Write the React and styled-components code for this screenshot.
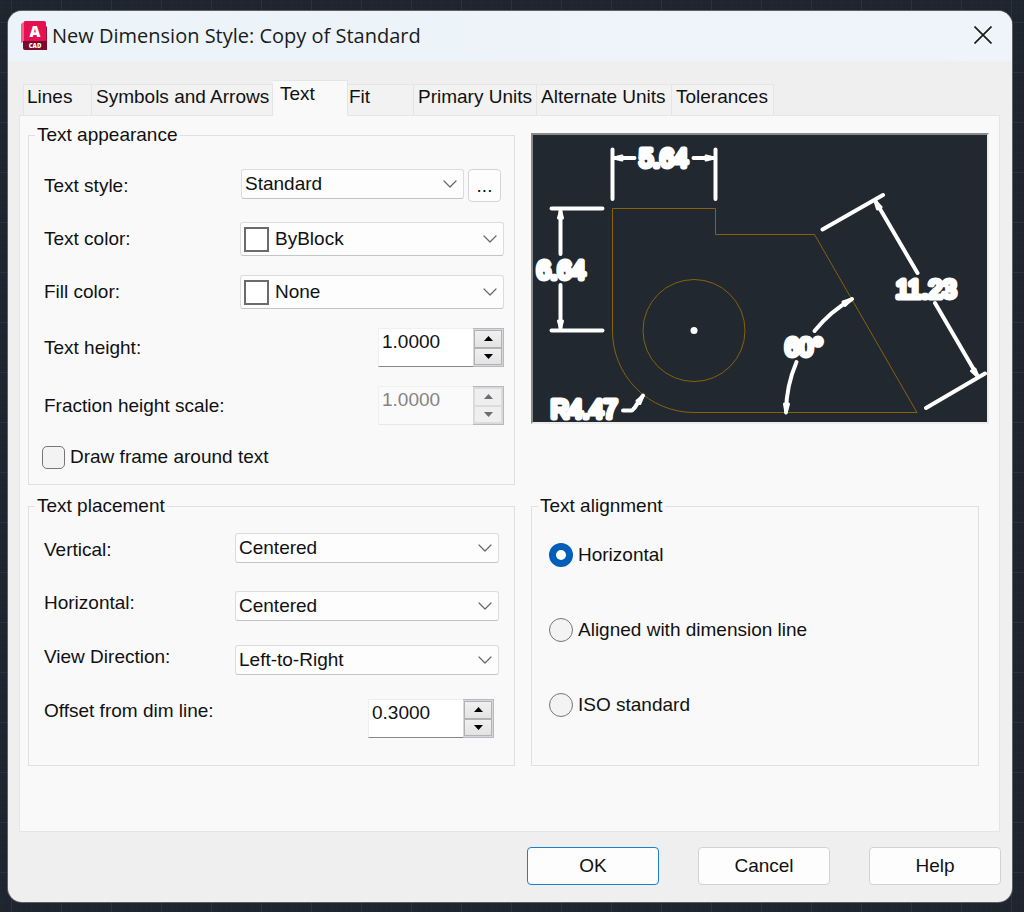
import React, { useState } from 'react';
import styled, { createGlobalStyle, css } from 'styled-components';
import { ChevronDown } from 'lucide-react';

const GlobalStyle = createGlobalStyle`
  * {
    box-sizing: border-box;
  }

  body {
    margin: 0;
    background-color: #1e252e;
    background-image:
      linear-gradient(to right, #2b323e 1px, transparent 1px),
      linear-gradient(to bottom, #2b323e 1px, transparent 1px),
      linear-gradient(to right, #212832 1px, transparent 1px),
      linear-gradient(to bottom, #212832 1px, transparent 1px);
    background-size: 50px 50px, 50px 50px, 10px 10px, 10px 10px;
    background-position: 11px 22px, 11px 22px, 1px 2px, 1px 2px;
    color: #111;
    font-family: 'Liberation Sans', Arial, sans-serif;
    font-size: 19px;
    line-height: 22px;
  }

  button, input, select {
    margin: 0;
    font: inherit;
    color: inherit;
  }
`;

const Desktop = styled.div`
  display: flex;
  min-height: 100vh;
  padding: 11px 12px 10px 8px;
`;

const Dialog = styled.form`
  flex: 1;
  min-width: 0;
  display: flex;
  flex-direction: column;
  background: #efefef;
  border-radius: 14px;
  box-shadow: 0 0 0 1px #5d6165;
  overflow: hidden;
`;

const TitleBar = styled.header`
  display: flex;
  align-items: center;
  height: 50px;
  padding: 0 20px 2px 13px;
  background: linear-gradient(to right, #ebf4f8, #eff3fa);
`;

const Title = styled.h1`
  flex: 1;
  margin: 0 0 0 4px;
  padding-top: 2px;
  font-family: 'Open Sans', 'Noto Sans', sans-serif;
  font-size: 20px;
  font-weight: 400;
  line-height: 28px;
  color: #1b1b1b;
`;

const CloseButton = styled.button`
  display: flex;
  padding: 0;
  border: 0;
  background: none;
`;

const Tabs = styled.div`
  display: flex;
  align-items: flex-end;
  padding: 19px 12px 0 15px;
`;

const Tab = styled.button`
  display: flex;
  align-items: flex-start;
  width: ${props => props.$width}px;
  height: 31px;
  padding: 0 0 0 4px;
  border: 1px solid #e5e5e5;
  border-width: 1px 1px 0 0;
  background: #f2f2f2;
  line-height: 24px;
  white-space: nowrap;

  &:first-child {
    padding-left: 3px;
    border-left-width: 1px;
  }

  ${props => props.$active && css`
    height: 36px;
    margin-bottom: -1px;
    padding-left: 7px;
    background: #f9f9f9;
    line-height: 26px;
    z-index: 1;

    & + button {
      padding-left: 1px;
    }
  `}
`;

const Panel = styled.main`
  flex: 1;
  display: grid;
  grid-template-columns: minmax(0, 487fr) minmax(0, 458fr);
  align-content: start;
  gap: 10px 16px;
  margin: 0 12px 0 11px;
  padding: 8px 10px 24px 8px;
  border: 1px solid #e5e5e5;
  background: #f9f9f9;
`;

const Group = styled.fieldset`
  min-width: 0;
  margin: 0 ${props => props.$inset || 0}px 0 0;
  padding: 0;
  border: 1px solid #e0e0e0;
`;

const Legend = styled.legend`
  margin-left: 6px;
  padding: 0 2px;
`;

const AppearanceFields = styled.div`
  display: flex;
  flex-direction: column;
  gap: 19px;
  padding: 23px 10px 14px 13px;
`;

const PlacementFields = styled.div`
  display: flex;
  flex-direction: column;
  gap: 24px;
  padding: 16px 15px 27px 13px;
`;

const AlignmentFields = styled.div`
  display: flex;
  flex-direction: column;
  align-items: flex-start;
  gap: 49px;
  padding: 25px 17px;
`;

const Row = styled.div`
  display: flex;
  align-items: flex-start;
  min-height: ${props => props.$height || 30}px;
`;

const Label = styled.label`
  flex: 1;
  align-self: ${props => (props.$top ? 'flex-start' : 'center')};
  padding-left: 2px;
  line-height: 24px;
`;

const Field = styled.div`
  display: flex;
  justify-content: flex-end;
  gap: 4px;
  width: 264px;
  padding: ${props => props.$padding || '0'};
`;

// The select, its chevron and the colour swatch share one grid cell
const SelectBox = styled.div`
  flex: 1;
  display: grid;
  grid-template-columns: 1fr;
  align-items: center;
  height: ${props => (props.$swatch ? 34 : 30)}px;

  > * {
    grid-area: 1 / 1;
  }

  svg {
    justify-self: end;
    margin-right: 2px;
    pointer-events: none;
  }
`;

const SelectInput = styled.select`
  appearance: none;
  width: 100%;
  height: 100%;
  padding: 0 28px 0 ${props => (props.$swatch ? 34 : 3)}px;
  border: 1px solid #dcdcdc;
  border-bottom-color: #c4c4c4;
  border-radius: 3px;
  background: #fdfdfd;
`;

const Swatch = styled.span`
  width: 25px;
  height: 25px;
  margin-left: 4px;
  border: 2px solid #6b6b6b;
  background: #fff;
  pointer-events: none;
`;

const MoreButton = styled.button`
  width: 33px;
  height: 33px;
  padding: 0;
  border: 1px solid #d4d4d4;
  border-radius: 4px;
  background: #fdfdfd;
`;

const Spinner = styled.div`
  display: grid;
  grid-template-columns: 95px 31px;
  width: 126px;
  height: 39px;
`;

const SpinnerInput = styled.input`
  min-width: 0;
  padding: 0 0 12px 3px;
  border: 1px solid #efefef;
  border-right: 0;
  border-bottom-color: #868686;
  border-radius: 0;
  background: #fff;

  &:disabled {
    border-bottom-color: #e8e8e8;
    background: #fafafa;
    color: #858585;
  }
`;

const SpinnerButtons = styled.div`
  display: grid;
  grid-template-rows: 1fr 1fr;
  padding: 1px;
  border: 1px solid #b9b9bd;
  border-left-width: 0;
  background: #d8d8dc;
`;

const StepButton = styled.button`
  display: flex;
  align-items: center;
  justify-content: center;
  padding: 0;
  border: 1px solid #b2b2b2;
  background: linear-gradient(#f0f0f0, #e3e3e3);
  color: #000;

  &:disabled {
    border-color: #dcdcdc;
    background: #efefef;
    color: #6d6d6d;
  }
`;

const Choice = styled.label`
  display: flex;
  align-items: center;
  gap: 5px;
  min-height: 26px;
`;

const Checkbox = styled.input`
  appearance: none;
  width: 23px;
  height: 23px;
  border: 1px solid #767676;
  border-radius: 5px;
  background: #f3f3f3;

  &:checked {
    background: #005fb8;
  }
`;

const Radio = styled.input`
  appearance: none;
  width: 24px;
  height: 24px;
  border: 1px solid #767676;
  border-radius: 50%;
  background: #f3f3f3;

  &:checked {
    border: 7px solid #005fb8;
    background: #fff;
  }
`;

const Preview = styled.div`
  align-self: start;
  margin-top: 9px;
  border: 2px solid;
  border-color: #8a8a8a #ececec #ececec #8a8a8a;
  background: #21282f;

  svg {
    display: block;
    width: 100%;
    overflow: visible;
  }
`;

const Footer = styled.footer`
  display: flex;
  justify-content: flex-end;
  gap: 39px;
  padding: 15px 11px 17px;
`;

const DialogButton = styled.button`
  width: 132px;
  height: 38px;
  border: 1px solid ${props => (props.$primary ? '#1b7fd0' : '#d2d2d2')};
  border-radius: 4px;
  background: #fdfdfd;
`;

const tabs = [
  { name: 'Lines', width: 69 },
  { name: 'Symbols and Arrows', width: 181 },
  { name: 'Text', width: 75 },
  { name: 'Fit', width: 66 },
  { name: 'Primary Units', width: 123 },
  { name: 'Alternate Units', width: 135 },
  { name: 'Tolerances', width: 102 },
];

const alignments = ['Horizontal', 'Aligned with dimension line', 'ISO standard'];

function Logo() {
  return (
    <svg width="27" height="29" viewBox="0 0 27 29" aria-hidden="true">
      <path d="M0 3 L4 0 V20 L0 22 Z" fill="#f0608a" />
      <path d="M24 4 L26 6 V29 H24 Z" fill="#9b0f3c" />
      <path d="M4 0 H23 Q25 0 25 2 V21 H3 V1 Z" fill="#e51050" />
      <path d="M2 20 H26 V29 H4 Q2 29 2 27 Z" fill="#7c0a2e" />
      <text x="14" y="16" textAnchor="middle" fontFamily="Open Sans, sans-serif" fontSize="15" fontWeight="800" fill="#fff">A</text>
      <text x="14" y="27" textAnchor="middle" fontFamily="Open Sans, sans-serif" fontSize="6" fontWeight="800" fill="#fff">CAD</text>
    </svg>
  );
}

function Select({ id, options, swatch }) {
  return (
    <SelectBox $swatch={swatch}>
      <SelectInput id={id} $swatch={swatch}>
        {options.map(option => <option key={option}>{option}</option>)}
      </SelectInput>
      {swatch && <Swatch />}
      <ChevronDown size={24} strokeWidth={1.2} color="#666" />
    </SelectBox>
  );
}

function NumberSpinner({ id, initial, disabled }) {
  const [value, setValue] = useState(initial);
  const step = amount => setValue((Math.max(0, Number(value) + amount) || 0).toFixed(4));

  return (
    <Spinner>
      <SpinnerInput id={id} value={value} disabled={disabled} onChange={e => setValue(e.target.value)} />
      <SpinnerButtons>
        <StepButton type="button" aria-label="Increase" disabled={disabled} onClick={() => step(0.1)}>
          <svg width="9" height="5" viewBox="0 0 9 5"><path d="M0 5 L4.5 0 L9 5 Z" fill="currentColor" /></svg>
        </StepButton>
        <StepButton type="button" aria-label="Decrease" disabled={disabled} onClick={() => step(-0.1)}>
          <svg width="9" height="5" viewBox="0 0 9 5"><path d="M0 0 L4.5 5 L9 0 Z" fill="currentColor" /></svg>
        </StepButton>
      </SpinnerButtons>
    </Spinner>
  );
}

function DimensionPreview() {
  return (
    <Preview>
      <svg viewBox="533 135 454 287" role="img" aria-label="Dimension preview">
        {/* part outline */}
        <g fill="none" stroke="#866308" strokeWidth="1">
          <path d="M612.5 330 V208.5 H715.5 V234.5 H814.5 L917 412.5 H694 A81.5 81.5 0 0 1 612.5 330" />
          <circle cx="694" cy="330.5" r="51" />
        </g>
        <circle cx="694" cy="330.5" r="3.5" fill="#fff" />

        {/* extension and dimension lines */}
        <g fill="none" stroke="#fff" strokeWidth="4" strokeLinecap="round">
          <path d="M612.5 149.5 V199 M715.5 149.5 V199 M614 158 H634.5 M693.5 158 H714" />
          <path d="M551.5 208.5 H602.5 M551.5 330.5 H602.5 M560.5 211 V254 M560.5 285 V328" />
          <path d="M822.5 229.5 L883 195 M926 408 L985 373.5" />
          <path d="M876 202 L917.5 273 M935 303 L977 375" />
          <path d="M852 299 A131 131 0 0 0 814.5 331 M796.5 362 A131 131 0 0 0 786 412" />
          <path d="M623 410.5 H632 Q635 408 637 404 L643 395.5" strokeLinejoin="round" />
        </g>

        {/* arrowheads */}
        <g fill="#fff" stroke="#fff" strokeWidth="3" strokeLinejoin="round">
          <path d="M614 158 L622 156 V160 Z M714 158 L706 156 V160 Z" />
          <path d="M560.5 211 L558.5 218 H562.5 Z M560.5 328 L558.5 321 H562.5 Z" />
          <path d="M875 201 L877.5 209 L881 207 Z M978 377 L971.5 371 L975 369 Z" />
          <path d="M852 299 L843 302 L845 305.5 Z M786 413 L784.5 404 H788.5 Z" />
          <path d="M643 396 L637 401 L640 403.5 Z" />
        </g>

        {/* dimension values */}
        <g fill="#fff" stroke="#fff" strokeWidth="5" strokeLinejoin="round" textAnchor="middle" fontFamily="Liberation Sans, Arial, sans-serif" fontSize="25">
          <text x="663.5" y="167">5.64</text>
          <text x="561" y="279">6.64</text>
          <text x="584" y="418">R4.47</text>
          <text x="926" y="298">11.23</text>
          <text x="804" y="356">60°</text>
        </g>
      </svg>
    </Preview>
  );
}

function App() {
  const [activeTab, setActiveTab] = useState('Text');
  const [alignment, setAlignment] = useState('Horizontal');

  return (
    <>
      <GlobalStyle />
      <Desktop>
        <Dialog onSubmit={e => e.preventDefault()}>
          <TitleBar>
            <Logo />
            <Title>New Dimension Style: Copy of Standard</Title>
            <CloseButton type="button" aria-label="Close">
              <svg width="18" height="18" viewBox="0 0 18 18" fill="none" stroke="#1b1b1b" strokeWidth="1.7">
                <path d="M0.5 0.5 L17.5 17.5 M17.5 0.5 L0.5 17.5" />
              </svg>
            </CloseButton>
          </TitleBar>

          <Tabs role="tablist">
            {tabs.map(tab => (
              <Tab
                key={tab.name}
                type="button"
                role="tab"
                aria-selected={activeTab === tab.name}
                $active={activeTab === tab.name}
                $width={tab.width}
                onClick={() => setActiveTab(tab.name)}
              >
                {tab.name}
              </Tab>
            ))}
          </Tabs>

          <Panel>
            <Group>
              <Legend>Text appearance</Legend>
              <AppearanceFields>
                <Row $height={34}>
                  <Label htmlFor="text-style">Text style:</Label>
                  <Field $padding="0 3px 0 1px">
                    <Select id="text-style" options={['Standard', 'Annotative']} />
                    <MoreButton type="button" aria-label="Edit text styles">...</MoreButton>
                  </Field>
                </Row>
                <Row $height={34}>
                  <Label htmlFor="text-color">Text color:</Label>
                  <Field>
                    <Select id="text-color" options={['ByBlock', 'ByLayer']} swatch />
                  </Field>
                </Row>
                <Row $height={34}>
                  <Label htmlFor="fill-color">Fill color:</Label>
                  <Field>
                    <Select id="fill-color" options={['None', 'Background']} swatch />
                  </Field>
                </Row>
                <Row>
                  <Label htmlFor="text-height">Text height:</Label>
                  <Field>
                    <NumberSpinner id="text-height" initial="1.0000" />
                  </Field>
                </Row>
                <Row>
                  <Label htmlFor="fraction-scale">Fraction height scale:</Label>
                  <Field>
                    <NumberSpinner id="fraction-scale" initial="1.0000" disabled />
                  </Field>
                </Row>
                <Choice>
                  <Checkbox type="checkbox" />
                  Draw frame around text
                </Choice>
              </AppearanceFields>
            </Group>

            <DimensionPreview />

            <Group>
              <Legend>Text placement</Legend>
              <PlacementFields>
                <Row $height={34}>
                  <Label htmlFor="vertical">Vertical:</Label>
                  <Field>
                    <Select id="vertical" options={['Centered', 'Above', 'Outside', 'JIS', 'Below']} />
                  </Field>
                </Row>
                <Row>
                  <Label htmlFor="horizontal" $top>Horizontal:</Label>
                  <Field>
                    <Select id="horizontal" options={['Centered', 'At Ext Line 1', 'At Ext Line 2']} />
                  </Field>
                </Row>
                <Row>
                  <Label htmlFor="view-direction" $top>View Direction:</Label>
                  <Field>
                    <Select id="view-direction" options={['Left-to-Right', 'Right-to-Left']} />
                  </Field>
                </Row>
                <Row>
                  <Label htmlFor="offset" $top>Offset from dim line:</Label>
                  <Field $padding="0 5px 0 0">
                    <NumberSpinner id="offset" initial="0.3000" />
                  </Field>
                </Row>
              </PlacementFields>
            </Group>

            <Group $inset={10}>
              <Legend>Text alignment</Legend>
              <AlignmentFields>
                {alignments.map(name => (
                  <Choice key={name}>
                    <Radio
                      type="radio"
                      name="alignment"
                      value={name}
                      checked={alignment === name}
                      onChange={() => setAlignment(name)}
                    />
                    {name}
                  </Choice>
                ))}
              </AlignmentFields>
            </Group>
          </Panel>

          <Footer>
            <DialogButton type="submit" $primary>OK</DialogButton>
            <DialogButton type="button">Cancel</DialogButton>
            <DialogButton type="button">Help</DialogButton>
          </Footer>
        </Dialog>
      </Desktop>
    </>
  );
}

export default App;
